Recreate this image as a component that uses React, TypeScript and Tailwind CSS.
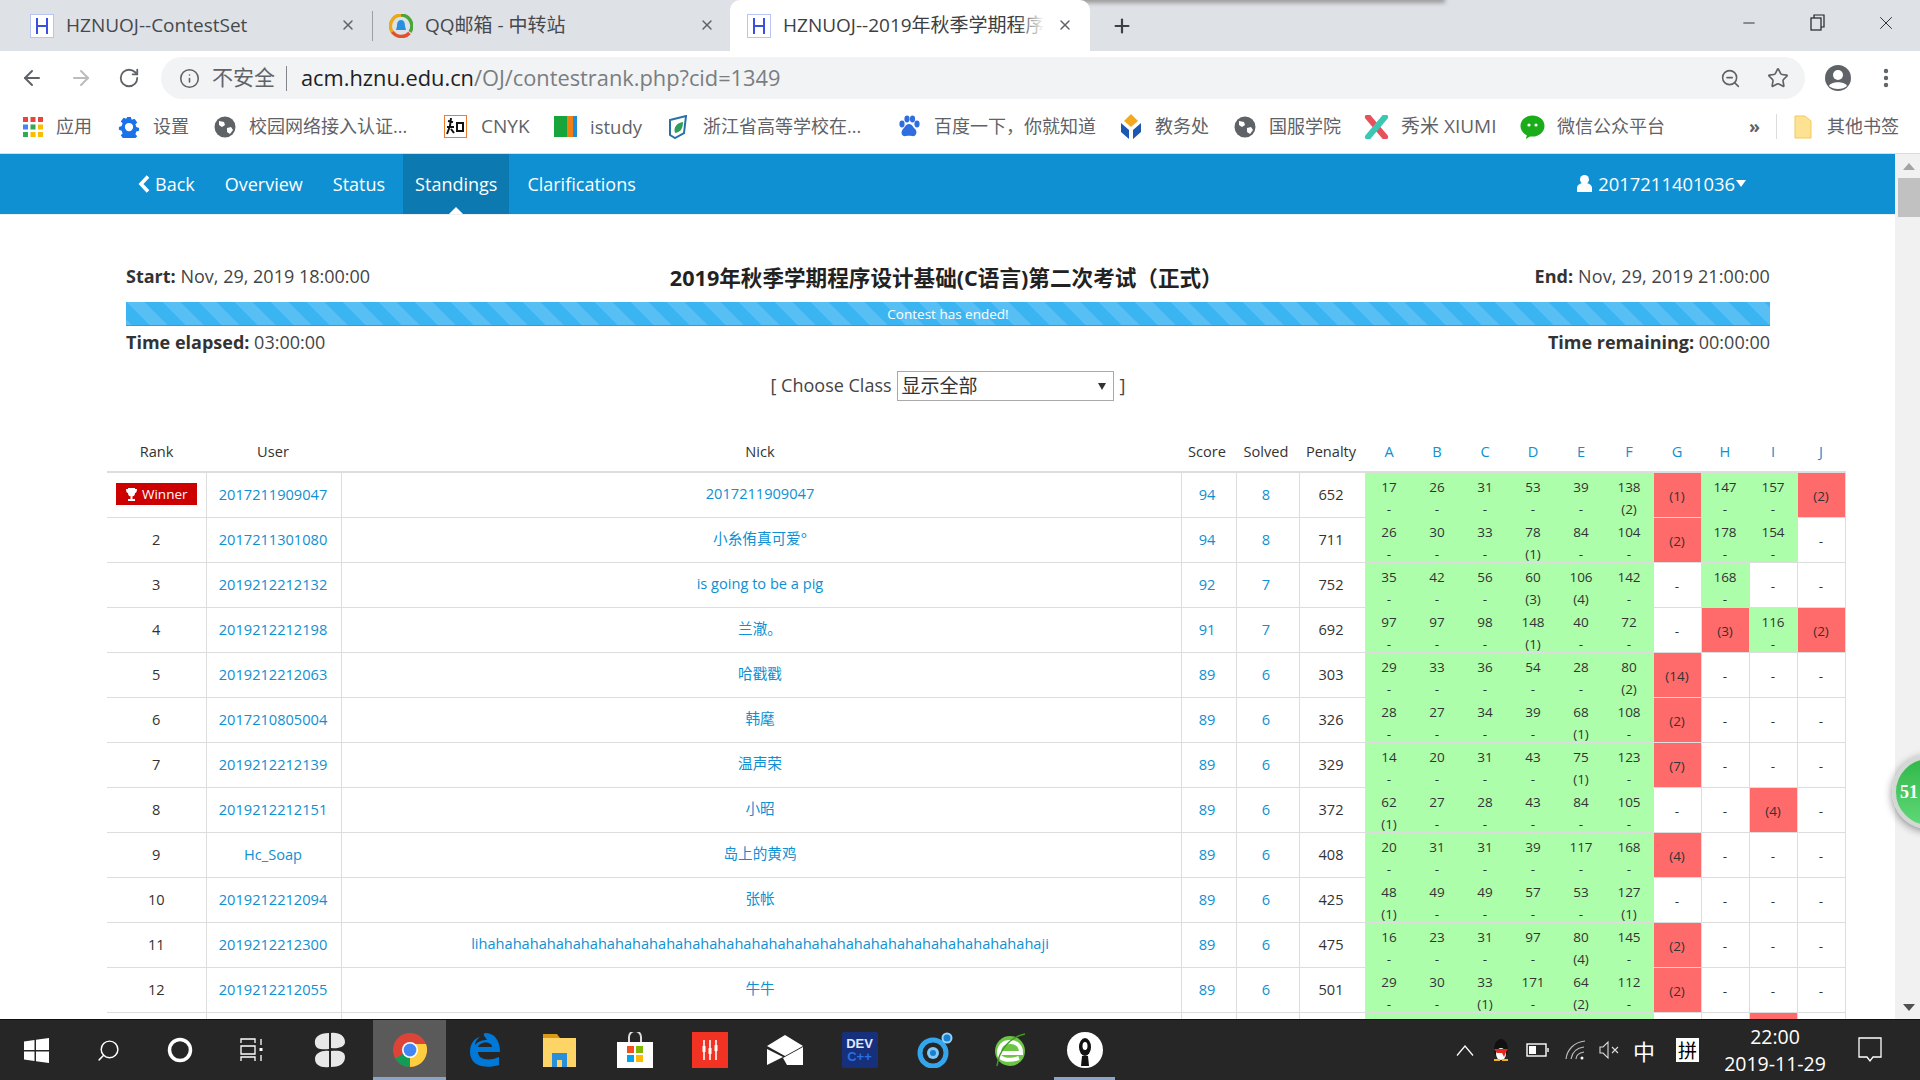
import React from "react";
import { ArrowLeft, ArrowRight, RotateCw, Info, ZoomOut, Star, MoreVertical, X, Plus, Minus, Search } from "lucide-react";

const sans = "font-['Open_Sans','Noto_Sans_CJK_SC',sans-serif]";

function HIcon() {
  return (
    <svg width="24" height="24" viewBox="0 0 24 24" className="shrink-0">
      <rect x="0.5" y="0.5" width="23" height="23" fill="#fff" stroke="#b9c4f5" />
      <path d="M7 4v16M17 4v16M7 12h10" stroke="#3b4fe0" strokeWidth="2" fill="none" />
    </svg>
  );
}
function QQMail() {
  return (
    <svg width="24" height="24" viewBox="0 0 24 24" className="shrink-0">
      <path d="M12 1a11 11 0 0 0-8 18" stroke="#e8a91a" strokeWidth="3.4" fill="none" />
      <path d="M12 1a11 11 0 0 1 9 17" stroke="#49a53c" strokeWidth="3.4" fill="none" />
      <path d="M3.500 18a11 11 0 0 0 17 1" stroke="#e2512b" strokeWidth="3.4" fill="none" />
      <path d="M12 6c3 0 4 3 4 6l1 4H7l1-4c0-3 1-6 4-6z" fill="#2b8fe0" />
    </svg>
  );
}
function Tab({ icon, title, active, cls, closeCls }: { icon: React.ReactNode; title: string; active?: boolean; cls: string; closeCls: string }) {
  return (
    <div className={`relative h-[51px] flex items-center shrink-0 ${cls} ${active ? "bg-white rounded-t-[10px]" : ""}`}>
      {icon}
      <span className={`ml-3 text-[19px] whitespace-nowrap ${active ? "text-[#3c4043]" : "text-[#45494e]"}`}>{title}</span>
      {active && <span className="absolute left-[288px] top-[10px] w-[26px] h-[30px] bg-gradient-to-r from-transparent to-white"></span>}
      <X size={16} strokeWidth={2.2} className={`absolute text-[#5f6368] ${closeCls}`} />
    </div>
  );
}

function Globe() {
  return (
    <svg width="22" height="22" viewBox="0 0 22 22" className="shrink-0">
      <circle cx="11" cy="11" r="10.500" fill="#5f6368" />
      <path d="M5 5l5 1 1 3-3 2-3-2zM13 12l4-1 2 3-3 4-3-2z" fill="#fff" />
    </svg>
  );
}
const bmIcons: Record<string, React.ReactNode> = {
  apps: (
    <svg width="20" height="20" viewBox="0 0 20 20" className="shrink-0">
      {[
        ["#e8453c", "#e8453c", "#e8453c"],
        ["#4285f4", "#34a853", "#fbbc05"],
        ["#34a853", "#fbbc05", "#fbbc05"],
      ].map((r, i) => r.map((c, j) => <rect key={`${i}${j}`} x={j * 7.500} y={i * 7.500} width="5" height="5" fill={c} />))}
    </svg>
  ),
  gear: (
    <svg width="22" height="22" viewBox="0 0 24 24" className="shrink-0">
      <path d="M10 1h4l1 3 3-1 3 4-2 2 1 3 3 1v-1 4l-3 1-1 3 2 2-3 3-3-1-1 3h-4l-1-3-3 1-3-4 2-2-1-3-3-1v-3l3-1 1-3-2-2 3-4 3 1z" fill="#1a73e8" />
      <circle cx="12" cy="12" r="4.500" fill="#fff" />
    </svg>
  ),
  globe: <Globe />,
  cnyk: (
    <svg width="23" height="23" viewBox="0 0 23 23" className="shrink-0">
      <rect x="0.500" y="0.500" width="22" height="22" fill="#fff" stroke="#ef7a2c" />
      <path d="M4 6l5 1M7 3l-1 8M3 12h7M6 11l-3 8M7 14l3 4M13 8h6v8h-6z" stroke="#111" strokeWidth="2" fill="none" />
    </svg>
  ),
  istudy: (
    <svg width="23" height="21" viewBox="0 0 23 21" className="shrink-0">
      <rect width="13" height="21" fill="#17a43b" />
      <rect x="13" width="6" height="21" fill="#f07f17" />
      <rect x="19" width="4" height="21" fill="#1c8ed8" />
    </svg>
  ),
  zj: (
    <svg width="22" height="24" viewBox="0 0 22 24" className="shrink-0">
      <path d="M3 5l16-4-2 17-9 5-5-3z" fill="none" stroke="#2a6fa8" strokeWidth="2" />
      <path d="M8 18c-2-6 2-10 8-11 0 6-2 10-8 11z" fill="#2e9e58" />
    </svg>
  ),
  baidu: (
    <svg width="22" height="24" viewBox="0 0 22 24" className="shrink-0" fill="#2f6de0">
      <ellipse cx="4" cy="9" rx="2.600" ry="3.400" />
      <ellipse cx="9" cy="4" rx="2.600" ry="3.400" />
      <ellipse cx="14.500" cy="4" rx="2.600" ry="3.400" />
      <ellipse cx="19" cy="9" rx="2.600" ry="3.400" />
      <path d="M11 9c3 0 4 3 6 5 3 3 1 8-3 7-2-.5-4-.5-6 0-4 1-6-3-3-7 2-2 3-5 6-5z" />
    </svg>
  ),
  jwc: (
    <svg width="22" height="26" viewBox="0 0 22 26" className="shrink-0">
      <path d="M11 0l7 7-7 6-7-6z" fill="#f2a91f" />
      <path d="M1 9l8 7v9l-8-7zM21 9l-8 7v9l8-7z" fill="#1c58b0" />
    </svg>
  ),
  xiumi: (
    <svg width="25" height="24" viewBox="0 0 25 24" className="shrink-0">
      <path d="M4 2l17 20" stroke="#e8505b" strokeWidth="6" strokeLinecap="round" />
      <path d="M21 2L4 22" stroke="#3cc7b4" strokeWidth="6" strokeLinecap="round" />
    </svg>
  ),
  wechat: (
    <svg width="25" height="24" viewBox="0 0 25 24" className="shrink-0">
      <ellipse cx="12.500" cy="11" rx="12" ry="10.500" fill="#1aad19" />
      <path d="M7 19l-1 5 6-4z" fill="#1aad19" />
      <circle cx="9" cy="10" r="1.600" fill="#fff" />
      <circle cx="16" cy="10" r="1.600" fill="#fff" />
    </svg>
  ),
};

function Bm({ icon, label, cls, box, size = "text-[18px]" }: { icon: React.ReactNode; label: string; cls: string; box: string; size?: string }) {
  return (
    <div className={`flex items-center shrink-0 ${cls}`}>
      <div className={`flex items-center shrink-0 ${box}`}>{icon}</div>
      <span className={`${size} text-[#5f6368] whitespace-nowrap`}>{label}</span>
    </div>
  );
}

function BrowserChrome() {
  return (
    <div className={`shrink-0 ${sans}`}>
      <div className="relative h-[51px] bg-[#dee1e6] flex items-center">
        <div className="absolute left-[1015px] top-[-4px] w-[430px] h-[7px] bg-[#9a9a9a] blur-[2px]"></div>
        <Tab icon={<HIcon />} title="HZNUOJ--ContestSet" cls="w-[372px] pl-[30px]" closeCls="left-[340px] top-[17px]" />
        <div className="w-px h-[30px] bg-[#9aa0a6] shrink-0"></div>
        <Tab icon={<QQMail />} title="QQ邮箱 - 中转站" cls="w-[357px] pl-[16px]" closeCls="left-[326px] top-[17px]" />
        <Tab icon={<HIcon />} title="HZNUOJ--2019年秋季学期程序" active cls="w-[360px] pl-[17px]" closeCls="left-[327px] top-[17px]" />
        <Plus size={22} strokeWidth={2.400} className="ml-[21px] text-[#3c4043] shrink-0" />
        <div className="ml-auto flex items-center text-[#222] mb-[6px]">
          <Minus size={18} strokeWidth={1.200} className="mr-[52px]" />
          <svg width="16" height="17" viewBox="0 0 16 17" className="mr-[49px]" fill="none" stroke="#222" strokeWidth="1.200">
            <rect x="1" y="4" width="10" height="12" />
            <path d="M4 4V1h10v12h-3" />
          </svg>
          <X size={22} strokeWidth={1} className="mr-[23px]" />
        </div>
      </div>
      <div className="h-[51px] bg-white flex items-center pt-[3px]">
        <ArrowLeft size={24} strokeWidth={2} className="ml-[20px] text-[#5f6368]" />
        <ArrowRight size={24} strokeWidth={2} className="ml-[25px] text-[#babcbe]" />
        <RotateCw size={22} strokeWidth={2} className="ml-[25px] text-[#5f6368]" />
        <div className="ml-[21px] w-[1644px] h-[42px] rounded-full bg-[#f1f3f4] flex items-center pl-[18px] pr-[16px]">
          <Info size={21} strokeWidth={1.800} className="text-[#5f6368] shrink-0" />
          <span className="ml-[12px] text-[21px] text-[#5f6368] whitespace-nowrap">不安全</span>
          <div className="ml-[11px] w-px h-[25px] bg-[#80868b]"></div>
          <span className="ml-[14px] text-[21.800px] whitespace-nowrap text-[#7a7d81]">
            <span className="text-[#202124]">acm.hznu.edu.cn</span>/OJ/contestrank.php?cid=1349
          </span>
          <ZoomOut size={21} strokeWidth={1.800} className="ml-auto text-[#5f6368]" />
          <Star size={22} strokeWidth={1.800} className="ml-[26px] text-[#5f6368]" />
        </div>
        <svg width="26" height="26" viewBox="0 0 26 26" className="ml-[20px] shrink-0">
          <circle cx="13" cy="13" r="13" fill="#5f6368" />
          <circle cx="13" cy="10" r="5" fill="#fff" />
          <path d="M4 21c2-5 16-5 18 0-4 4-14 4-18 0z" fill="#fff" />
        </svg>
        <MoreVertical size={24} strokeWidth={2.400} className="ml-[23px] text-[#5f6368]" />
      </div>
      <div className="h-[52px] bg-white flex items-center pb-[2px] pl-[23px] border-b border-[#dadce0]">
        <Bm icon={bmIcons.apps} label="应用" cls="w-[95px]" box="w-[33px]" />
        <Bm icon={bmIcons.gear} label="设置" cls="w-[96px]" box="w-[35px]" />
        <Bm icon={bmIcons.globe} label="校园网络接入认证..." cls="w-[230px]" box="w-[35px]" />
        <Bm icon={bmIcons.cnyk} label="CNYK" cls="w-[110px]" box="w-[37px]" size="text-[19px]" />
        <Bm icon={bmIcons.istudy} label="istudy" cls="w-[113px]" box="w-[36px]" size="text-[18.500px]" />
        <Bm icon={bmIcons.zj} label="浙江省高等学校在..." cls="w-[231px]" box="w-[36px]" />
        <Bm icon={bmIcons.baidu} label="百度一下，你就知道" cls="w-[222px]" box="w-[36px]" />
        <Bm icon={bmIcons.jwc} label="教务处" cls="w-[114px]" box="w-[35px]" />
        <Bm icon={bmIcons.globe} label="国服学院" cls="w-[130px]" box="w-[35px]" />
        <Bm icon={bmIcons.xiumi} label="秀米 XIUMI" cls="w-[156px]" box="w-[37px]" size="text-[19px]" />
        <Bm icon={bmIcons.wechat} label="微信公众平台" cls="w-[145px]" box="w-[37px]" />
        <span className="ml-auto text-[18px] text-[#5f6368] font-bold">»</span>
        <div className="ml-[16px] w-px h-[25px] bg-[#dadce0]"></div>
        <svg width="18" height="24" viewBox="0 0 18 24" className="ml-[17px] shrink-0">
          <path d="M1 1h10l6 5v17H1z" fill="#fde293" stroke="#f4c95d" />
        </svg>
        <span className="ml-[15px] mr-[21px] text-[18px] text-[#5f6368] whitespace-nowrap">其他书签</span>
      </div>
    </div>
  );
}

type Row = { rank: number; user: string; nick: string; score?: number; solved?: number; pen?: number; cells: string[] };
const ha = "lihahahahahahahahahahahahahahahahahahahahahahahahahahahahahahahahahaji";
const rows: Row[] = [
  { rank: 1, user: "2017211909047", nick: "2017211909047", score: 94, solved: 8, pen: 652, cells: ["17", "26", "31", "53", "39", "138(2)", "(1)", "147", "157", "(2)"] },
  { rank: 2, user: "2017211301080", nick: "小糸侑真可爱°", score: 94, solved: 8, pen: 711, cells: ["26", "30", "33", "78(1)", "84", "104", "(2)", "178", "154", ""] },
  { rank: 3, user: "2019212212132", nick: "is going to be a pig", score: 92, solved: 7, pen: 752, cells: ["35", "42", "56", "60(3)", "106(4)", "142", "", "168", "", ""] },
  { rank: 4, user: "2019212212198", nick: "兰澈。", score: 91, solved: 7, pen: 692, cells: ["97", "97", "98", "148(1)", "40", "72", "", "(3)", "116", "(2)"] },
  { rank: 5, user: "2019212212063", nick: "哈戳戳", score: 89, solved: 6, pen: 303, cells: ["29", "33", "36", "54", "28", "80(2)", "(14)", "", "", ""] },
  { rank: 6, user: "2017210805004", nick: "韩麾", score: 89, solved: 6, pen: 326, cells: ["28", "27", "34", "39", "68(1)", "108", "(2)", "", "", ""] },
  { rank: 7, user: "2019212212139", nick: "温声荣", score: 89, solved: 6, pen: 329, cells: ["14", "20", "31", "43", "75(1)", "123", "(7)", "", "", ""] },
  { rank: 8, user: "2019212212151", nick: "小昭", score: 89, solved: 6, pen: 372, cells: ["62(1)", "27", "28", "43", "84", "105", "", "", "(4)", ""] },
  { rank: 9, user: "Hc_Soap", nick: "岛上的黄鸡", score: 89, solved: 6, pen: 408, cells: ["20", "31", "31", "39", "117", "168", "(4)", "", "", ""] },
  { rank: 10, user: "2019212212094", nick: "张帐", score: 89, solved: 6, pen: 425, cells: ["48(1)", "49", "49", "57", "53", "127(1)", "", "", "", ""] },
  { rank: 11, user: "2019212212300", nick: ha, score: 89, solved: 6, pen: 475, cells: ["16", "23", "31", "97", "80(4)", "145", "(2)", "", "", ""] },
  { rank: 12, user: "2019212212055", nick: "牛牛", score: 89, solved: 6, pen: 501, cells: ["29", "30", "33(1)", "171", "64(2)", "112", "(2)", "", "", ""] },
];

function Prob({ v }: { v: string }) {
  if (v === "") {
    return (
      <td className="p-0 border border-[#ddd] text-center align-middle text-[13.500px] text-[#333]">
        <div className="h-[44px] leading-[46px]">-</div>
      </td>
    );
  }
  if (v[0] === "(") {
    return (
      <td className="p-0 border border-[#ddd] bg-[#ff6a6a] text-center align-middle text-[13.500px] text-[#333]">
        <div className="h-[44px] leading-[47px]">{v}</div>
      </td>
    );
  }
  const m = v.match(/^(\d+)(\(\d+\))?$/);
  return (
    <td className="p-0 border border-[#ddd] bg-[#adfeab] text-center align-top text-[13.500px] text-[#333]">
      <div className="h-[44px] overflow-hidden pt-[3px] leading-[22px]">
        <div>{m?.[1]}</div>
        <div>{m?.[2] ?? "-"}</div>
      </div>
    </td>
  );
}

function Standings() {
  const heads = ["A", "B", "C", "D", "E", "F", "G", "H", "I", "J"];
  const link = "text-[#0e90d2]";
  return (
    <div className="relative flex-1 min-w-0 bg-white overflow-hidden">
      <div className="h-[60px] bg-[#0e90d2] flex items-center text-white text-[18px] pl-[126px] pr-[149px]">
        <span className="px-[12px] flex items-center gap-[5px]">
          <svg width="12" height="18" viewBox="0 0 12 18"><path d="M10 1.500L3 9l7 7.500" fill="none" stroke="#fff" strokeWidth="3.600" /></svg>
          Back
        </span>
        <span className="ml-[6px] px-[12px]">Overview</span>
        <span className="ml-[6px] px-[12px]">Status</span>
        <span className="relative ml-[6px] h-full px-[12px] flex items-center bg-[#0c79b1]">
          Standings
          <span className="absolute bottom-0 left-1/2 -ml-[7px] w-0 h-0 border-x-[7px] border-x-transparent border-b-[7px] border-b-white"></span>
        </span>
        <span className="ml-[6px] px-[12px]">Clarifications</span>
        <span className="ml-auto flex items-center gap-[6px]">
          <svg width="15" height="17" viewBox="0 0 15 17" fill="#fff"><circle cx="7.500" cy="4.500" r="4.500" /><path d="M0 17v-4c0-3 3-5 7.500-5s7.500 2 7.500 5v4z" /></svg>
          <span className="flex items-center text-[18.400px]">2017211401036<span className="w-0 h-0 ml-[1px] border-x-[5px] border-x-transparent border-t-[7px] border-t-white"></span></span>
        </span>
      </div>
      <div className="h-px bg-[#eeeeee]"></div>
      <div className="pl-[126px] w-[1770px] text-[#333]">
        <div className="relative flex items-center justify-between pt-[35px] h-[87px] text-[18px]">
          <span><b className="font-bold">Start:</b> <span className="text-[#444]">Nov, 29, 2019 18:00:00</span></span>
          <span className="mt-[5px] mr-[12px] font-bold text-[21.600px] text-[#222] whitespace-nowrap">2019年秋季学期程序设计基础(C语言)第二次考试（正式）</span>
          <span className="tracking-[0.1px]"><b className="font-bold">End:</b> <span className="text-[#444]">Nov, 29, 2019 21:00:00</span></span>
        </div>
        <div className="h-[24px] bg-[#3bb4f2] bg-[linear-gradient(45deg,rgba(255,255,255,.15)_25%,transparent_25%,transparent_50%,rgba(255,255,255,.15)_50%,rgba(255,255,255,.15)_75%,transparent_75%,transparent)] bg-[length:36px_36px] text-center text-white text-[13.500px] leading-[24px] border-b border-[#2aa0dc]">
          Contest has ended!
        </div>
        <div className="flex justify-between h-[34px] pb-[2px] items-center text-[18px]">
          <span><b className="font-bold">Time elapsed:</b> <span className="text-[#444]">03:00:00</span></span>
          <span><b className="font-bold">Time remaining:</b> <span className="text-[#444]">00:00:00</span></span>
        </div>
        <div className="mt-[11px] flex items-center justify-center h-[30px] text-[18px] text-[#444]">
          <span className="mb-[2px]">[ Choose Class</span>
          <div className="ml-[5px] w-[217px] h-[30px] border border-[#a9a9a9] flex items-center pl-[4px] pr-[7px] text-[19px] text-[#333]">
            <span>显示全部</span>
            <span className="ml-auto w-0 h-0 border-x-[4px] border-x-transparent border-t-[7px] border-t-[#333]"></span>
          </div>
          <span className="ml-[6px] mb-[2px]">]</span>
        </div>
      </div>
      <table className="mt-[32px] ml-[107px] w-[1738px] table-fixed border-collapse text-[14.600px] text-[#333]">
        <colgroup>
          <col className="w-[99px]" />
          <col className="w-[135px]" />
          <col className="w-[840px]" />
          <col className="w-[55px]" />
          <col className="w-[63px]" />
          <col className="w-[66px]" />
          {heads.map((h) => <col key={h} className="w-[48px]" />)}
        </colgroup>
        <thead>
          <tr className="h-[39px] border-b-2 border-[#ddd] text-center">
            <td className="p-0">Rank</td>
            <td className="p-0 pr-[1px]">User</td>
            <td className="p-0 pr-[2px]">Nick</td>
            <td className="p-0 pr-[3px]">Score</td>
            <td className="p-0 pr-[3px]">Solved</td>
            <td className="p-0 pr-[2px]">Penalty</td>
            {heads.map((h) => <td key={h} className={`p-0 ${link}`}>{h}</td>)}
          </tr>
        </thead>
        <tbody>
          {rows.map((r) => (
            <tr key={r.rank} className="h-[45px] text-center">
              <td className="p-0 border border-[#ddd] border-l-0">
                {r.rank === 1 ? (
                  <span className="inline-flex items-center justify-center w-[81px] h-[22px] bg-[#cc0000] text-white text-[13.500px] gap-[4px]">
                    <svg width="13" height="13" viewBox="0 0 13 13" fill="#fff"><path d="M3 0h7v5a3.500 3.500 0 0 1-7 0zM1 1h2v4C1.500 5 1 3 1 1zM12 1h-2v4c1.500 0 2-2 2-4zM5.500 8h2v3H10v2H3v-2h2.500z" /></svg>
                    Winner
                  </span>
                ) : r.rank}
              </td>
              <td className={`p-0 pr-[1px] border border-[#ddd] ${link}`}>{r.user}</td>
              <td className={`p-0 pr-[2px] border border-[#ddd] ${link}`}><div className="mb-[2px]">{r.nick}</div></td>
              <td className={`p-0 pr-[3px] border border-[#ddd] ${link}`}>{r.score}</td>
              <td className={`p-0 pr-[3px] border border-[#ddd] ${link}`}>{r.solved}</td>
              <td className="p-0 pr-[2px] border border-[#ddd]">{r.pen}</td>
              {r.cells.map((c, i) => <Prob key={i} v={c} />)}
            </tr>
          ))}
          <tr className="h-[45px] text-center">
            <td className="p-0 border border-[#ddd] border-l-0"></td>
            <td className="p-0 border border-[#ddd]"></td>
            <td className="p-0 border border-[#ddd]"></td>
            <td className="p-0 border border-[#ddd]"></td>
            <td className="p-0 border border-[#ddd]"></td>
            <td className="p-0 border border-[#ddd]"></td>
            {[0, 1, 2, 3, 4, 5].map((i) => <td key={i} className="p-0 border border-[#ddd] bg-[#adfeab]"></td>)}
            <td className="p-0 border border-[#ddd]"></td>
            <td className="p-0 border border-[#ddd]"></td>
            <td className="p-0 border border-[#ddd] bg-[#ff6a6a]"></td>
            <td className="p-0 border border-[#ddd]"></td>
          </tr>
        </tbody>
      </table>
    </div>
  );
}

function Scrollbar() {
  return (
    <div className="w-[25px] shrink-0 bg-[#f1f1f1] flex flex-col items-end">
      <div className="w-[22px] h-[24px] flex items-center justify-center">
        <span className="w-0 h-0 border-x-[6px] border-x-transparent border-b-[7px] border-b-[#a3a3a3]"></span>
      </div>
      <div className="w-[22px] h-[39px] bg-[#c1c1c1]"></div>
      <div className="mt-auto w-[22px] h-[24px] flex items-center justify-center">
        <span className="w-0 h-0 border-x-[6px] border-x-transparent border-t-[7px] border-t-[#505050]"></span>
      </div>
    </div>
  );
}

function Slot({ cls, children }: { cls: string; children: React.ReactNode }) {
  return <div className={`relative h-full flex items-center justify-center shrink-0 ${cls}`}>{children}</div>;
}
function Taskbar() {
  return (
    <div className={`relative shrink-0 h-[61px] bg-[#262626] border-t border-[#111] flex items-center ${sans}`}>
      <Slot cls="w-[72px]">
        <svg width="25" height="25" viewBox="0 0 25 25" fill="#fff"><path d="M0 3.500l10.500-1.500v10H0zM12 1.800L25 0v12H12zM0 13.500h10.500v9.500L0 21.500zM12 13.500h13V25l-13-1.800z" /></svg>
      </Slot>
      <Slot cls="w-[72px]"><Search size={25} strokeWidth={1.400} className="text-white -scale-x-100" /></Slot>
      <Slot cls="w-[72px]">
        <svg width="26" height="26" viewBox="0 0 26 26"><circle cx="13" cy="13" r="10.500" fill="none" stroke="#fff" strokeWidth="3.500" /></svg>
      </Slot>
      <Slot cls="w-[72px]">
        <svg width="24" height="24" viewBox="0 0 24 24" fill="none" stroke="#fff" strokeWidth="1.300"><path d="M1 5V1h14v4M1 23v-4h14v4M1 8h14v8H1zM21 1v6M21 17v6" /><path d="M21 10v3" strokeWidth="3" /></svg>
      </Slot>
      <Slot cls="w-[84px]">
        <svg width="32" height="36" viewBox="0 0 32 36" fill="#e8e8e8"><path d="M15 1C5 1 0 5 1 12c1 5 6 6 14 5zM17 19c8-1 14 0 14 6 0 7-6 10-14 10zM17 1c8-1 14 3 14 9 0 5-7 7-14 6zM15 19C8 18 1 21 1 27c0 6 6 9 14 8z" /></svg>
      </Slot>
      <Slot cls="w-[75px]">
        <div className="absolute left-[1px] top-0 right-[1px] bottom-0 bg-[#5a5a5a] border-b-[3px] border-b-[#8ba5c9]"></div>
        <svg width="34" height="34" viewBox="0 0 34 34" className="relative">
          <circle cx="17" cy="17" r="17" fill="#db4437" />
          <path d="M17 17L2.300 25.500A17 17 0 0 0 17 34l8-17z" fill="#0f9d58" />
          <path d="M17 17l-0 17A17 17 0 0 0 33 11H17z" fill="#ffcd40" />
          <circle cx="17" cy="17" r="8" fill="#fff" />
          <circle cx="17" cy="17" r="6.400" fill="#4285f4" />
        </svg>
      </Slot>
      <Slot cls="w-[75px]">
        <svg width="30" height="34" viewBox="0 0 30 34"><path d="M15 0c10 0 15 8 15 19H8c0 7 10 10 21 5v8c-12 4-29 2-29-13C0 10 5 5 10 4 6 7 5 10 5 12c3-4 8-5 12-5-2-4-5-5-2-7zM8 14h14c0-6-12-6-14 0z" fill="#0078d7" /></svg>
      </Slot>
      <Slot cls="w-[75px]">
        <svg width="33" height="33" viewBox="0 0 33 33">
          <path d="M0 0h14l3 4h-17z" fill="#d89a17" />
          <rect y="4" width="33" height="29" fill="#fdd465" />
          <path d="M9 33V19h15v14h-5v-7h-5v7z" fill="#2a8fd8" />
        </svg>
      </Slot>
      <Slot cls="w-[75px]">
        <svg width="36" height="36" viewBox="0 0 36 36">
          <path d="M12 10V5a6 6 0 0 1 12 0v5" fill="none" stroke="#ddd" strokeWidth="2" />
          <rect y="10" width="36" height="26" fill="#fff" />
          <rect x="10" y="14" width="7" height="7" fill="#f25022" />
          <rect x="19" y="14" width="7" height="7" fill="#7fba00" />
          <rect x="10" y="23" width="7" height="7" fill="#00a4ef" />
          <rect x="19" y="23" width="7" height="7" fill="#ffb900" />
        </svg>
      </Slot>
      <Slot cls="w-[75px]">
        <svg width="36" height="36" viewBox="0 0 36 36">
          <rect width="36" height="36" fill="#f23223" />
          <path d="M12 8v20M18 8v20M24 8v20" stroke="#fff" strokeWidth="1.600" />
          <path d="M12 14v6M18 16v6M24 13v6" stroke="#fff" strokeWidth="3" />
        </svg>
      </Slot>
      <Slot cls="w-[75px]">
        <svg width="36" height="30" viewBox="0 0 36 30"><path d="M0 11L18 0l18 11-18 10z" fill="#fff" /><path d="M0 14l16 8L0 30zM36 12v18H20l-4-7z" fill="#fff" /></svg>
      </Slot>
      <Slot cls="w-[75px]">
        <div className="w-[36px] h-[36px] rounded-[2px] bg-[#16307c] flex flex-col items-center justify-center font-bold leading-none text-[13px] font-['Liberation_Sans',sans-serif]">
          <span className="text-[#dfe7ff]">DEV</span>
          <span className="text-[#2b6fe0]">C++</span>
        </div>
      </Slot>
      <Slot cls="w-[75px]">
        <svg width="36" height="36" viewBox="0 0 36 36">
          <circle cx="16" cy="21" r="13" fill="none" stroke="#34a6ee" strokeWidth="5" />
          <circle cx="16" cy="21" r="6" fill="#7ec9f5" />
          <circle cx="16" cy="21" r="3" fill="#1b7fd0" />
          <circle cx="30" cy="6" r="4.500" fill="#1b7fd0" stroke="#8fd3fa" strokeWidth="2" />
        </svg>
      </Slot>
      <Slot cls="w-[75px]">
        <svg width="32" height="36" viewBox="0 0 32 36">
          <circle cx="16" cy="19" r="15" fill="#6cc644" />
          <path d="M5 21h22c0-7-4-11-11-11S5 14 5 21c0 6 8 9 20 5" fill="none" stroke="#fff" strokeWidth="4" />
          <path d="M3 34C5 18 16 5 31 2" fill="none" stroke="#3d9c22" strokeWidth="1.500" />
        </svg>
      </Slot>
      <Slot cls="w-[75px]">
        <div className="absolute left-[7px] right-[7px] bottom-0 h-[3px] bg-[#8ba5c9]"></div>
        <svg width="36" height="36" viewBox="0 0 36 36">
          <circle cx="18" cy="18" r="18" fill="#fff" />
          <ellipse cx="18" cy="15" rx="6" ry="9" fill="#111" />
          <path d="M15 24h6l1 10h-8z" fill="#111" />
          <ellipse cx="18" cy="14" rx="2.500" ry="4" fill="#fff" />
        </svg>
      </Slot>

      <div className="ml-auto flex items-center h-full text-white">
        <svg width="18" height="11" viewBox="0 0 18 11" fill="none" stroke="#fff" strokeWidth="1.200"><path d="M1 10.500L9 1l8 9.500" /></svg>
        <svg width="20" height="24" viewBox="0 0 20 24" className="ml-[17px]">
          <ellipse cx="10" cy="11" rx="7" ry="10" fill="#111" />
          <ellipse cx="10" cy="16" rx="5" ry="6" fill="#fff" />
          <path d="M3 11h14l-2 3-2 5-2-4H6z" fill="#e6261f" />
          <path d="M3 21h6v2H3zM11 21h6v2h-6z" fill="#f4b02a" />
        </svg>
        <svg width="23" height="14" viewBox="0 0 23 14" className="ml-[15px]" fill="none" stroke="#fff" strokeWidth="1.400"><rect x="1" y="1" width="19" height="12" /><rect x="3" y="3" width="7" height="8" fill="#fff" stroke="none" /><path d="M22 5v4" /></svg>
        <svg width="21" height="20" viewBox="0 0 21 20" className="ml-[16px]" fill="none" stroke="#bbb" strokeWidth="1.200"><path d="M1 19C2 10 9 2 20 1M6 19c1-6 5-11 13-12M11 19c0-3 3-6 8-7" /><circle cx="17" cy="18" r="1.500" fill="#fff" stroke="none" /></svg>
        <svg width="21" height="20" viewBox="0 0 21 20" className="ml-[13px]" fill="none" stroke="#ddd" strokeWidth="1.100"><path d="M1 7h3l5-5v16l-5-5H1zM13 7l6 6M19 7l-6 6" /></svg>
        <span className="ml-[13px] text-[22px] leading-none font-['Noto_Sans_CJK_SC',sans-serif]">中</span>
        <span className="ml-[21px] w-[23px] h-[24px] bg-white text-black text-[19px] leading-[24px] text-center font-['Noto_Sans_CJK_SC',sans-serif]">拼</span>
        <div className="ml-[19px] w-[114px] flex flex-col items-center text-[19.500px] leading-[27px] text-white">
          <span>22:00</span>
          <span>2019-11-29</span>
        </div>
        <svg width="24" height="26" viewBox="0 0 24 26" className="ml-[26px] mr-[38px]" fill="none" stroke="#fff" strokeWidth="1.300"><path d="M1 1h22v19h-8l-3 4-3-4H1z" /></svg>
      </div>
    </div>
  );
}

export default function App() {
  return (
    <div className={`relative w-[1920px] h-[1080px] overflow-hidden flex flex-col bg-white ${sans}`}>
      <BrowserChrome />
      <div className="flex-1 min-h-0 flex">
        <Standings />
        <Scrollbar />
      </div>
      <Taskbar />
      <div className="absolute left-[1892px] top-[755px] w-[74px] h-[74px] rounded-full bg-gradient-to-b from-[#2fb84a] to-[#5fd877] border-[4px] border-[#d4d8d4] shadow-[0_2px_8px_rgba(0,0,0,.45)] flex items-center pl-[4px]">
        <span className="text-white font-bold text-[18px] font-['Liberation_Serif',serif]">51</span>
      </div>
    </div>
  );
}
